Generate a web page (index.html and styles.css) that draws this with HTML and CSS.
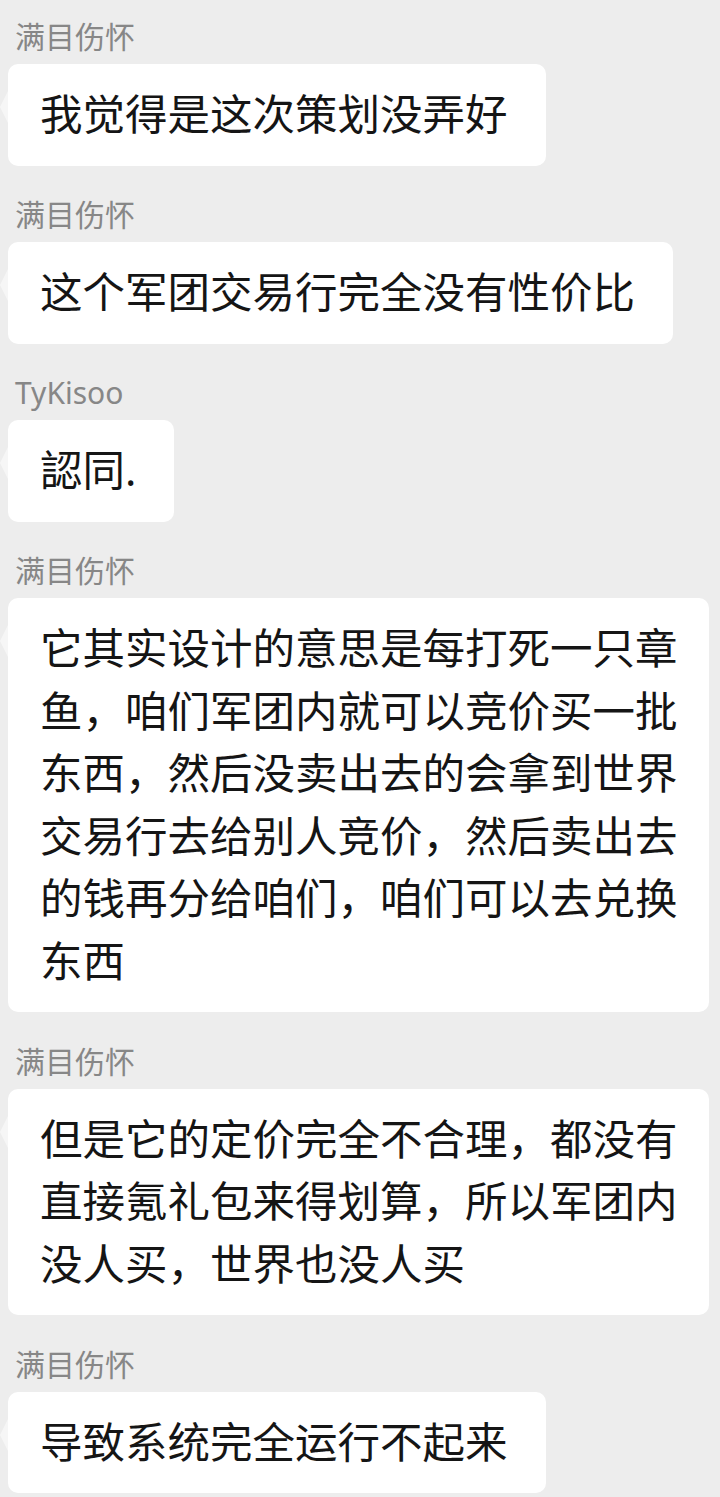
FILE: index.html
```html
<!DOCTYPE html>
<html>
<head>
  <title>群聊</title>
  <meta charset="UTF-8" />
  <link rel="stylesheet" href="styles.css">
</head>
<body>
  <div class="chat">
    <!-- one block per message -->
    <div class="msg">
      <div class="name">满目伤怀</div>
      <div class="bubble">我觉得是这次策划没弄好</div>
    </div>

    <div class="msg">
      <div class="name">满目伤怀</div>
      <div class="bubble">这个军团交易行完全没有性价比</div>
    </div>

    <div class="msg">
      <div class="name">TyKisoo</div>
      <div class="bubble">認同.</div>
    </div>

    <div class="msg">
      <div class="name">满目伤怀</div>
      <div class="bubble long">它其实设计的意思是每打死一只章鱼，咱们军团内就可以竞价买一批东西，然后没卖出去的会拿到世界交易行去给别人竞价，然后卖出去的钱再分给咱们，咱们可以去兑换东西</div>
    </div>

    <div class="msg">
      <div class="name">满目伤怀</div>
      <div class="bubble long">但是它的定价完全不合理，都没有直接氪礼包来得划算，所以军团内没人买，世界也没人买</div>
    </div>

    <div class="msg">
      <div class="name">满目伤怀</div>
      <div class="bubble">导致系统完全运行不起来</div>
    </div>
  </div>
</body>
</html>
```

FILE: styles.css
```css
body {
  margin: 0;
  background: #ededed;
  font-family: "Noto Sans", "Noto Sans CJK SC", sans-serif;
  overflow: hidden;
}
.chat {
  display: flex;
  flex-direction: column;
  align-items: flex-start;
  gap: 31.5px;
  padding: 19px 0 0 8px;
}
.msg {
  display: flex;
  flex-direction: column;
  align-items: flex-start;
}
.name {
  font-size: 30px;
  line-height: 36px;
  color: #878787;
  margin: 0 0 9px 7px;
}
.bubble {
  position: relative;
  max-width: 701px;
  box-sizing: border-box;
  background: #fff;
  color: #151515;
  font-size: 42.5px;
  line-height: 62.5px;
  padding: 19px 38px 20px 32px;
  border-radius: 10px;
}
.bubble.long { padding-right: 31px; }
/* little tail on the left */
.bubble::before {
  content: "";
  position: absolute;
  left: -8px;
  top: 27px;
  border-style: solid;
  border-width: 16px 8px 16px 0;
  border-color: transparent #f6f6f6 transparent transparent;
}
```
